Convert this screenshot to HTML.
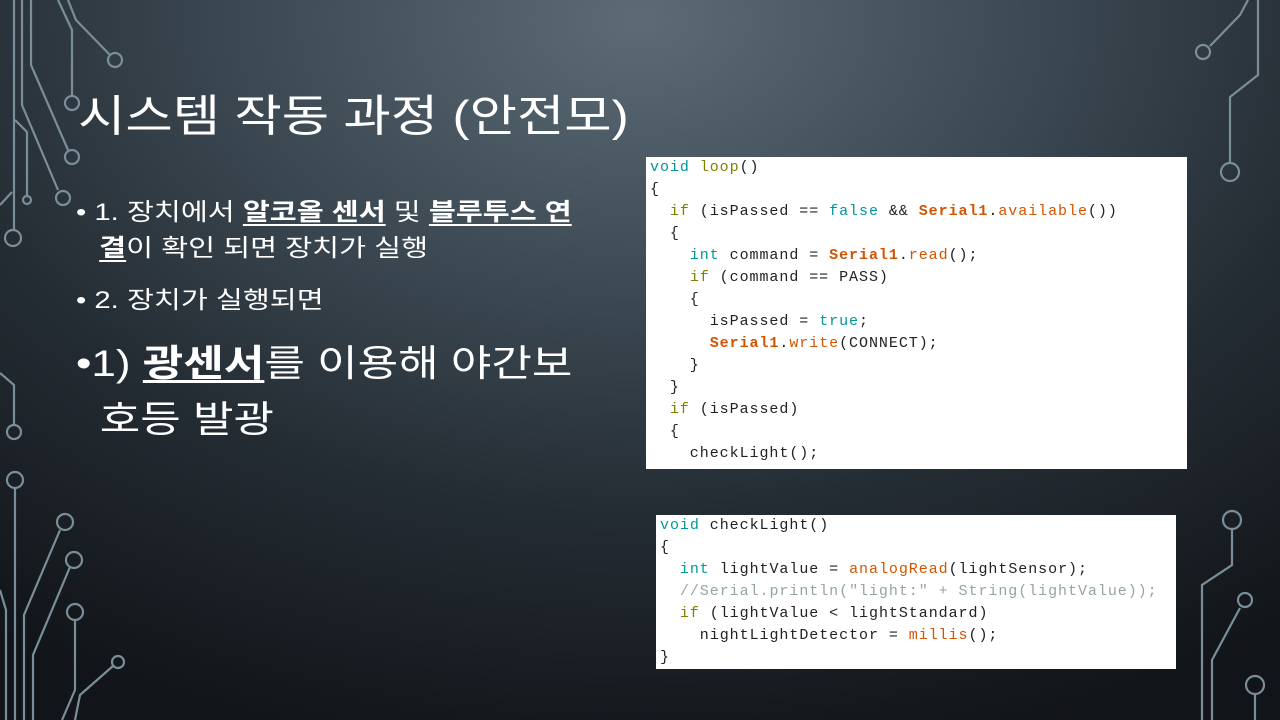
<!DOCTYPE html>
<html><head><meta charset="utf-8"><style>
*{margin:0;padding:0}
body{width:1280px;height:720px;overflow:hidden;position:relative;font-family:"Liberation Sans","Noto Sans CJK KR",sans-serif;
background:radial-gradient(ellipse 1100px 760px at 640px 20px,#5c6b76 0%,#3d4a54 35%,#242c33 65%,#111418 100%);color:#fff}
svg.c{position:absolute;left:0;top:0}
.t{position:absolute;left:78px;top:80px;font-size:44px;white-space:nowrap;transform:scaleX(1.17);transform-origin:0 0}
.b{position:absolute;left:76px;font-size:24px;white-space:nowrap;line-height:36px;transform:scaleX(1.22);transform-origin:0 0}
.b u{font-weight:bold;text-underline-offset:4px}
.big{font-size:37px;line-height:56px;transform:scaleX(1.19)}
.code{position:absolute;background:#fff;font-family:"Liberation Mono",monospace;font-size:15px;letter-spacing:0.95px;color:#222;white-space:pre;line-height:22px}
.k{color:#00979c}.o{color:#d35400}.ob{color:#d35400;font-weight:bold}.g{color:#808000}.cm{color:#95a5a6}
</style></head><body>
<svg class="c" width="1280" height="720" fill="none" stroke="#7a8e9a" stroke-width="2.2">
<path d="M14 0V230M22 0V105L58 190M31 0V65L68 150M58 0L72 30V96M68 0L76 20L110 55M15 120L27 132V195M0 205L12 192"/>
<circle cx="115" cy="60" r="7"/><circle cx="72" cy="103" r="7"/><circle cx="72" cy="157" r="7"/><circle cx="63" cy="198" r="7"/><circle cx="13" cy="238" r="8"/><circle cx="27" cy="200" r="4"/>
<path d="M0 373L14 385V424M15 488V720M0 590L6 610V720M60 530L24 615V720M70 567L33 655V720M75 620V690L62 720M113 666L80 695L75 720"/>
<circle cx="14" cy="432" r="7"/><circle cx="15" cy="480" r="8"/><circle cx="65" cy="522" r="8"/><circle cx="74" cy="560" r="8"/><circle cx="75" cy="612" r="8"/><circle cx="118" cy="662" r="6"/>
<path d="M1248 0L1240 15L1210 46M1258 0V75L1230 97V162"/>
<circle cx="1203" cy="52" r="7"/><circle cx="1230" cy="172" r="9"/>
<path d="M1232 529V565L1202 585V720M1240 608L1212 660V720M1255 694V720"/>
<circle cx="1232" cy="520" r="9"/><circle cx="1245" cy="600" r="7"/><circle cx="1255" cy="685" r="9"/>
</svg>
<div class="t">시스템 작동 과정 (안전모)</div>
<div class="b" style="top:195px">• 1. 장치에서 <u>알코올 센서</u> 및 <u>블루투스 연</u><br><span style="margin-left:19px"></span><u>결</u>이 확인 되면 장치가 실행</div>
<div class="b" style="top:283px">• 2. 장치가 실행되면</div>
<div class="b big" style="top:336px">•1) <u>광센서</u>를 이용해 야간보<br><span style="margin-left:20px"></span>호등 발광</div>
<div class="code" style="left:646px;top:157px;width:537px;height:312px;padding:0 0 0 4px;"><span class="k">void</span> <span class="g">loop</span>()
{
  <span class="g">if</span> (isPassed == <span class="k">false</span> &amp;&amp; <span class="ob">Serial1</span>.<span class="o">available</span>())
  {
    <span class="k">int</span> command = <span class="ob">Serial1</span>.<span class="o">read</span>();
    <span class="g">if</span> (command == PASS)
    {
      isPassed = <span class="k">true</span>;
      <span class="ob">Serial1</span>.<span class="o">write</span>(CONNECT);
    }
  }
  <span class="g">if</span> (isPassed)
  {
    checkLight();</div>
<div class="code" style="left:656px;top:515px;width:516px;height:154px;padding:0 0 0 4px;line-height:22px"><span class="k">void</span> checkLight()
{
  <span class="k">int</span> lightValue = <span class="o">analogRead</span>(lightSensor);
  <span class="cm">//Serial.println("light:" + String(lightValue));</span>
  <span class="g">if</span> (lightValue &lt; lightStandard)
    nightLightDetector = <span class="o">millis</span>();
}</div>
</body></html>
